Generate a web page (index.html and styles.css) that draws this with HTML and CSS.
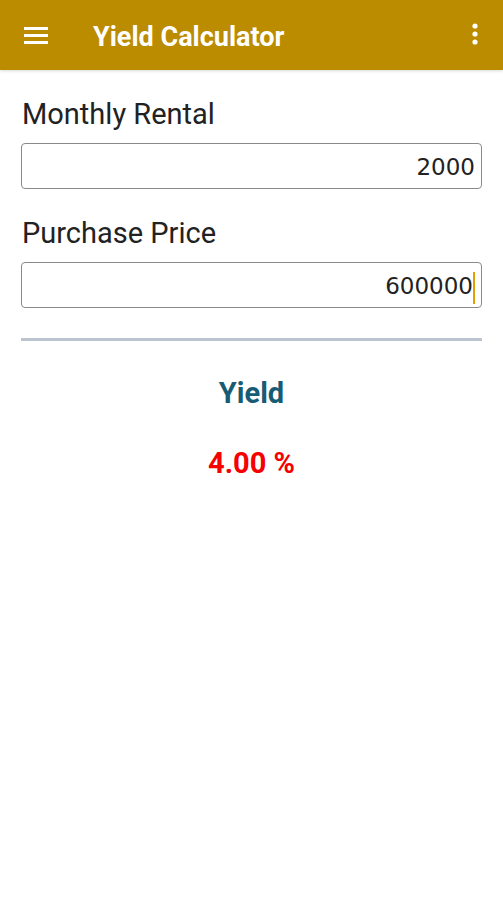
FILE: index.html
```html
<!DOCTYPE html>
<html lang="en">
<head>
    <meta charset="UTF-8">
    <meta name="viewport" content="width=device-width, initial-scale=1.0">
    <title>Yield Calculator</title>
    <link rel="stylesheet" href="styles.css">
</head>
<body>
    <div class="toolbar">
        <svg class="menu-icon" width="26" height="20" viewBox="0 0 26 20">
            <rect x="1" y="2" width="24" height="3" fill="#fff"/>
            <rect x="1" y="9" width="24" height="3" fill="#fff"/>
            <rect x="1" y="16" width="24" height="3" fill="#fff"/>
        </svg>
        <h1 class="title">Yield Calculator</h1>
        <svg class="more-icon" width="8" height="24" viewBox="0 0 8 24">
            <circle cx="4" cy="3" r="2.6" fill="#fff"/>
            <circle cx="4" cy="11" r="2.6" fill="#fff"/>
            <circle cx="4" cy="19" r="2.6" fill="#fff"/>
        </svg>
    </div>

    <div class="content">
        <label class="field-label">Monthly Rental</label>
        <div class="field">2000</div>

        <label class="field-label">Purchase Price</label>
        <div class="field">600000<span class="caret"></span></div>

        <hr class="divider">

        <div class="result-title">Yield</div>
        <div class="result-value">4.00 %</div>
    </div>
</body>
</html>
```

FILE: styles.css
```css
body {
    margin: 0;
    background: #fff;
    font-family: Roboto, "Noto Sans", sans-serif;
}
.toolbar {
    height: 70px;
    background-color: #bb8b00;
    display: flex;
    align-items: center;
    padding: 0 24px 0 23px;
    box-shadow: 0 1px 3px rgba(0, 0, 0, 0.15);
}
.menu-icon {
    flex: none;
}
.title {
    flex: 1;
    margin: 4px 0 0 44px;
    color: #fff;
    font-size: 27px;
    font-weight: bold;
}
.more-icon {
    flex: none;
}
.content {
    padding: 27px 21px;
}
.field-label {
    display: block;
    font-size: 29px;
    line-height: 34px;
    color: #222;
    padding-left: 1px;
    margin-bottom: 12px;
}
.field {
    height: 44px;
    border: 1px solid #8a8a8a;
    border-radius: 4px;
    font-family: "DejaVu Sans", sans-serif;
    font-size: 23px;
    color: #222;
    text-align: right;
    line-height: 46px;
    padding-right: 6px;
    margin-bottom: 27px;
}
.caret {
    display: inline-block;
    width: 2px;
    height: 32px;
    background: #e0a000;
    vertical-align: middle;
}
.divider {
    border: none;
    height: 3px;
    background: #bcc5cf;
    margin: 30px 0 0;
}
.result-title {
    text-align: center;
    font-weight: bold;
    font-size: 29px;
    line-height: 32px;
    color: #175c74;
    margin-top: 36px;
}
.result-value {
    text-align: center;
    font-weight: bold;
    font-size: 29px;
    line-height: 32px;
    color: #f60000;
    margin-top: 38px;
}
```
